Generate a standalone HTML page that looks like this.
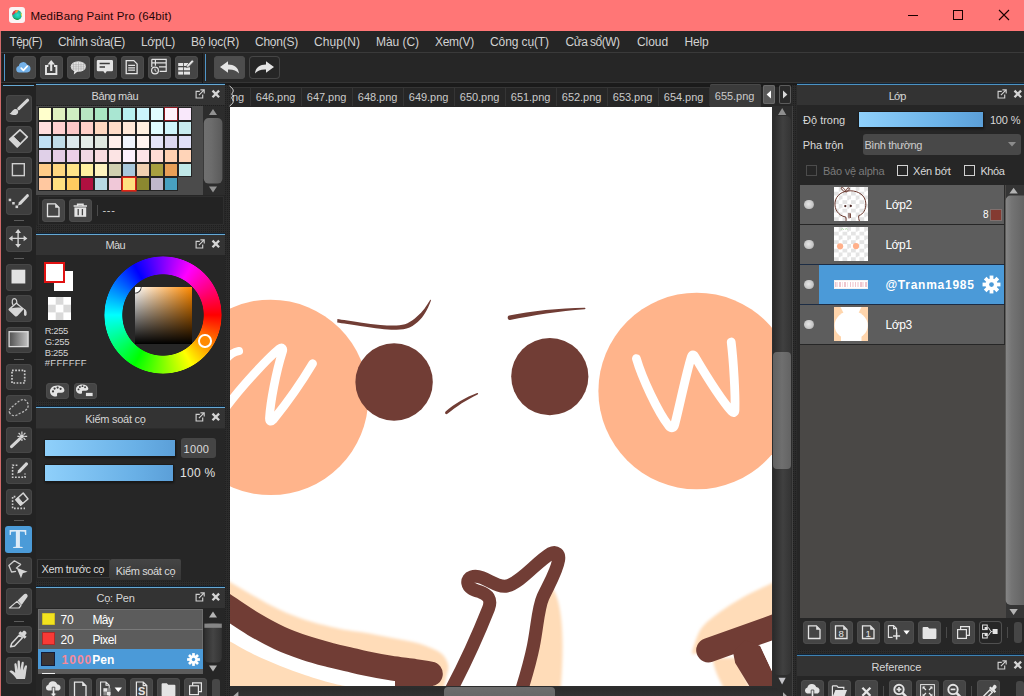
<!DOCTYPE html>
<html lang="vi"><head><meta charset="utf-8"><title>MediBang Paint Pro</title>
<style>

html,body{margin:0;padding:0;background:#262626;}
body{width:1024px;height:696px;overflow:hidden;position:relative;font-family:"Liberation Sans",sans-serif;}
#app{position:absolute;left:0;top:0;width:1024px;height:696px;overflow:hidden;background:#262626;}
#app div,#app span,#app svg{position:absolute;box-sizing:border-box;}
.t{white-space:nowrap;line-height:1;font-family:"Liberation Sans",sans-serif;}
.btn{background:#454545;border-radius:4px;box-shadow:inset 0 0 0 1px #4c4c4c;}
.blue{background:#66a9d4;}
.hdr{background:#333333;}
.dots{background:linear-gradient(90deg,#2b2b2b 1px,transparent 1px) 0 0/2px 2px,linear-gradient(0deg,#2b2b2b 1px,transparent 1px) 0 0/2px 2px,#1f1f1f;}

</style></head>
<body>
<div id="app">
<div style="left:0px;top:0px;width:1024px;height:31px;background:#ff7676;"></div>
<svg style="left:9px;top:7px;" width="16" height="16" viewBox="0 0 16 16"><defs><radialGradient id="ig" cx=".55" cy=".5" r=".6"><stop offset="0" stop-color="#2ee0d0"/><stop offset=".6" stop-color="#1cb89a"/><stop offset="1" stop-color="#18a070"/></radialGradient>
<filter id="ib" x="-20%" y="-20%" width="140%" height="140%"><feGaussianBlur stdDeviation=".45"/></filter><clipPath id="ic"><circle cx="8.1" cy="8" r="5"/></clipPath></defs>
<rect x="0" y="0" width="16" height="16" rx="3" fill="#fbf3f5"/>
<g filter="url(#ib)"><g clip-path="url(#ic)"><circle cx="8.1" cy="8" r="5" fill="url(#ig)"/>
<path d="M2 8 C3 4 5 2.6 7.4 2.6 C7 4.6 6 6.4 4.6 7.6z" fill="#e2304e"/>
<path d="M6.4 3 C7.4 2 9 2 9.6 3 C9 4.4 8 5.6 6.6 6.2 C6.2 5 6.2 4 6.4 3z" fill="#ff9440"/>
<path d="M11.6 5.2 C13 6.4 13.6 8 13 10 C12 9 11.6 7 11.6 5.2z" fill="#e4de5a"/>
<path d="M4.6 11 C6.6 13.6 10 13.6 12 11.4 C10 12 7 12 4.6 11z" fill="#1c9a3c"/></g></g></svg>
<span class="t" id="t0" style="left:30.40px;top:10.77px;font-size:11.5px;color:#1e0505;letter-spacing:0.128px;">MediBang Paint Pro (64bit)</span>
<svg style="left:900px;top:0px;" width="124" height="31" viewBox="0 0 124 31"><g stroke="#1a0000" stroke-width="1" fill="none" shape-rendering="crispEdges">
<path d="M8 15.5 H18"/><rect x="53.5" y="10.5" width="9" height="9"/></g>
<path d="M99 10 L109 20 M109 10 L99 20" stroke="#1a0000" stroke-width="1.1" fill="none"/></svg>
<div style="left:0px;top:31px;width:1024px;height:22px;background:#252525;"></div>
<div style="left:0px;top:52px;width:1024px;height:1px;background:#3a3a3a;"></div>
<span class="t" id="t1" style="left:9.40px;top:35.84px;font-size:12px;color:#d2d2d2;letter-spacing:-0.567px;">Tệp(F)</span>
<span class="t" id="t2" style="left:58.00px;top:35.84px;font-size:12px;color:#d2d2d2;letter-spacing:-0.366px;">Chỉnh sửa(E)</span>
<span class="t" id="t3" style="left:141.00px;top:35.84px;font-size:12px;color:#d2d2d2;letter-spacing:-0.315px;">Lớp(L)</span>
<span class="t" id="t4" style="left:191.00px;top:35.84px;font-size:12px;color:#d2d2d2;letter-spacing:-0.224px;">Bộ lọc(R)</span>
<span class="t" id="t5" style="left:255.00px;top:35.84px;font-size:12px;color:#d2d2d2;letter-spacing:-0.241px;">Chọn(S)</span>
<span class="t" id="t6" style="left:314.00px;top:35.84px;font-size:12px;color:#d2d2d2;letter-spacing:0.092px;">Chụp(N)</span>
<span class="t" id="t7" style="left:376.00px;top:35.84px;font-size:12px;color:#d2d2d2;letter-spacing:-0.049px;">Màu (C)</span>
<span class="t" id="t8" style="left:435.00px;top:35.84px;font-size:12px;color:#d2d2d2;letter-spacing:-0.279px;">Xem(V)</span>
<span class="t" id="t9" style="left:490.00px;top:35.84px;font-size:12px;color:#d2d2d2;letter-spacing:-0.103px;">Công cụ(T)</span>
<span class="t" id="t10" style="left:565.50px;top:35.84px;font-size:12px;color:#d2d2d2;letter-spacing:-0.523px;">Cửa sổ(W)</span>
<span class="t" id="t11" style="left:637.00px;top:35.84px;font-size:12px;color:#d2d2d2;letter-spacing:-0.072px;">Cloud</span>
<span class="t" id="t12" style="left:684.50px;top:35.84px;font-size:12px;color:#d2d2d2;letter-spacing:-0.172px;">Help</span>
<div style="left:0px;top:53px;width:1024px;height:31px;background:#262626;"></div>
<div style="left:2px;top:53px;width:200px;height:30px;background:#1e1e1e;"></div>
<div style="left:0px;top:82px;width:1024px;height:1px;background:#353535;"></div>
<div style="left:0px;top:83px;width:1024px;height:2px;background:#1b1b1b;"></div>
<div style="left:202px;top:53px;width:1px;height:30px;background:#161616;"></div>
<div style="left:4px;top:54px;width:1.4px;height:27px;background:#4f95c8;"></div>
<div style="left:205px;top:54px;width:1.4px;height:27px;background:#4f95c8;"></div>
<div class="btn" style="left:13px;top:56px;width:23px;height:23px;"><svg style="left:0px;top:0px;" width="23" height="23" viewBox="0 0 23 23"><path d="M6.2 16.6 a3.3 3.3 0 0 1 -.4 -6.5 a4.4 4.4 0 0 1 8.4 -1.4 a3.9 3.9 0 0 1 3.3 3.9 a3.7 3.7 0 0 1 -3.3 4z" fill="#74b2ea"/><path d="M8.2 12.2 l2.2 2.1 l3.9 -4.2" stroke="#fff" stroke-width="1.7" fill="none" stroke-linecap="round" stroke-linejoin="round"/></svg></div>
<div class="btn" style="left:40px;top:56px;width:23px;height:23px;"><svg style="left:0px;top:0px;" width="23" height="23" viewBox="0 0 23 23"><path d="M8.4 10 H6 V18 H16.4 V10 H14" stroke="#e4e4e4" stroke-width="1.9" fill="none"/><path d="M11.2 15 V7.4" stroke="#e4e4e4" stroke-width="2.1"/><path d="M7.4 8.6 L11.2 4 L15 8.6z" fill="#e4e4e4"/></svg></div>
<div class="btn" style="left:67px;top:56px;width:23px;height:23px;"><svg style="left:0px;top:0px;" width="23" height="23" viewBox="0 0 23 23"><ellipse cx="11.3" cy="10.5" rx="7.6" ry="5.3" fill="#e4e4e4"/><path d="M7.4 14.2 L6.8 18.4 L11 15.2z" fill="#e4e4e4"/><g stroke="#a6a6a6" stroke-width=".55"><path d="M6.5 7v7M9 6v9M11.5 5.5v10M14 6v9M16.5 7v7M4 8.7h15M3.8 10.8h15M4.2 12.9h14"/></g></svg></div>
<div class="btn" style="left:94px;top:56px;width:23px;height:23px;"><svg style="left:0px;top:0px;" width="23" height="23" viewBox="0 0 23 23"><path d="M4 4 h13.8 a1.2 1.2 0 0 1 1.2 1.2 v8.8 a1.2 1.2 0 0 1 -1.2 1.2 h-5 l-1.7 2.2 l-1.7 -2.2 h-5.4 a1.2 1.2 0 0 1 -1.2 -1.2 v-8.8 a1.2 1.2 0 0 1 1.2 -1.2z" fill="#e4e4e4"/><path d="M5.6 7.6 h10.2 M5.6 10.9 h5.4" stroke="#3c3c3c" stroke-width="1.5"/></svg></div>
<div class="btn" style="left:121px;top:56px;width:23px;height:23px;"><svg style="left:0px;top:0px;" width="23" height="23" viewBox="0 0 23 23"><path d="M5.2 4.6 h7.6 l3.3 3.3 v9.8 h-10.9z" fill="none" stroke="#e4e4e4" stroke-width="1.3"/><path d="M7.2 9.4h6.8M7.2 11.8h6.8M7.2 14.2h6.8" stroke="#e4e4e4" stroke-width="1.2"/></svg></div>
<div class="btn" style="left:148px;top:56px;width:23px;height:23px;"><svg style="left:0px;top:0px;" width="23" height="23" viewBox="0 0 23 23"><path d="M3.8 3.3 h14.4 v12 h-6.6 M3.8 3.3 v7.6 M3.8 6.9 h14.4 M7.4 3.3 v6.4 M11 10.9 h7.2" stroke="#e4e4e4" stroke-width="1.2" fill="none"/><circle cx="7" cy="14.5" r="3.4" fill="#454545" stroke="#e4e4e4" stroke-width="1.2"/><path d="M7 12.6 v2 l1.4 1" stroke="#e4e4e4" stroke-width="1" fill="none"/></svg></div>
<div class="btn" style="left:175px;top:56px;width:23px;height:23px;"><svg style="left:0px;top:0px;" width="23" height="23" viewBox="0 0 23 23"><g fill="#e4e4e4"><rect x="3.2" y="7" width="5" height="3"/><rect x="9" y="7" width="4.4" height="3"/><rect x="3.2" y="11.3" width="5" height="3"/><rect x="9" y="11.3" width="6" height="3"/><rect x="3.2" y="15.6" width="5" height="3"/><rect x="9" y="15.6" width="6" height="3"/></g><path d="M11.2 11.6 l.7 -2.4 l5.2 -5.4 l1.8 1.7 l-5.2 5.4z" fill="#e4e4e4" stroke="#454545" stroke-width=".6"/></svg></div>
<div class="btn" style="left:214px;top:56px;width:31px;height:23px;background:#4d4d4d;"><svg style="left:0px;top:0px;" width="31" height="23" viewBox="0 0 31 23"><path d="M6 11 L14 5.2 V8.6 C20 8.6 24.6 11.6 25 17.6 C22.6 14.4 19 13.4 14 13.6 V16.8z" fill="#e4e4e4"/></svg></div>
<div class="btn" style="left:249px;top:56px;width:31px;height:23px;background:#262626;box-shadow:inset 0 0 0 1px #454545;"><svg style="left:0px;top:0px;" width="31" height="23" viewBox="0 0 31 23"><path d="M25 11 L17 5.2 V8.6 C11 8.6 6.4 11.6 6 17.6 C8.4 14.4 12 13.4 17 13.6 V16.8z" fill="#e4e4e4"/></svg></div>
<div style="left:0px;top:85px;width:36px;height:611px;background:#232323;"></div>
<div class="blue" style="left:3px;top:85px;width:31px;height:1.2px;"></div>
<div style="left:0px;top:31px;width:1px;height:665px;background:#d06a6a;"></div>
<div class="btn" style="left:5.5px;top:95px;width:26.6px;height:26.6px;background:#3d3d3d;box-shadow:inset 0 0 0 1px #474747;"><svg style="left:0px;top:0px;" width="27" height="27" viewBox="0 0 27 27"><path d="M21.6 5.2 L12.8 13.6" stroke="#d6d6d6" stroke-width="3.1" stroke-linecap="round"/><path d="M3.4 18.7 C5.4 18 6 15.6 8 14.5 C10.2 13.4 12.3 14.8 12.2 16.9 C12 20 8.2 21.2 3.4 18.7z" fill="#d6d6d6"/></svg></div>
<div class="btn" style="left:5.5px;top:126px;width:26.6px;height:26.6px;background:#3d3d3d;box-shadow:inset 0 0 0 1px #474747;"><svg style="left:0px;top:0px;" width="27" height="27" viewBox="0 0 27 27"><path d="M14 3.9 L21.3 10.8 L11.2 21 L3.7 13.4z" fill="none" stroke="#d6d6d6" stroke-width="1.7" stroke-linejoin="round"/><path d="M3.7 13.4 L6.9 10.2 L14.5 17.6 L11.2 21z" fill="#d6d6d6" stroke="#d6d6d6" stroke-width="1" stroke-linejoin="round"/></svg></div>
<div class="btn" style="left:5.5px;top:157px;width:26.6px;height:26.6px;background:#3d3d3d;box-shadow:inset 0 0 0 1px #474747;"><svg style="left:0px;top:0px;" width="27" height="27" viewBox="0 0 27 27"><rect x="6.4" y="6.7" width="11.9" height="11.9" fill="none" stroke="#cfcfcf" stroke-width="1.4"/></svg></div>
<div class="btn" style="left:5.5px;top:188px;width:26.6px;height:26.6px;background:#3d3d3d;box-shadow:inset 0 0 0 1px #474747;"><svg style="left:0px;top:0px;" width="27" height="27" viewBox="0 0 27 27"><path d="M13 14.2 L20.6 6.4 C21.6 5.4 23.6 7.2 22.6 8.4 L15.2 16.4 L12 17.4z" fill="#d6d6d6"/><g fill="#d6d6d6"><rect x="2.7" y="10.7" width="2.5" height="2.5"/><rect x="6.2" y="14" width="2.5" height="2.5"/><rect x="9.5" y="17.5" width="2.6" height="2.6"/></g></svg></div>
<div class="btn" style="left:5.5px;top:225.5px;width:26.6px;height:26.6px;background:#3d3d3d;box-shadow:inset 0 0 0 1px #474747;"><svg style="left:0px;top:0px;" width="27" height="27" viewBox="0 0 27 27"><g transform="translate(-1.4,-1.1)"><path d="M13.5 4.2 L16.4 8 H14.2 V12.8 H19 V10.6 L22.8 13.5 L19 16.4 V14.2 H14.2 V19 H16.4 L13.5 22.8 L10.6 19 H12.8 V14.2 H8 V16.4 L4.2 13.5 L8 10.6 V12.8 H12.8 V8 H10.6z" fill="#d6d6d6"/></g></svg></div>
<div class="btn" style="left:5.5px;top:264px;width:26.6px;height:26.6px;background:#3d3d3d;box-shadow:inset 0 0 0 1px #474747;"><svg style="left:0px;top:0px;" width="27" height="27" viewBox="0 0 27 27"><rect x="5.5" y="5.7" width="13.8" height="13.8" fill="#e2e2e2"/></svg></div>
<div class="btn" style="left:5.5px;top:295px;width:26.6px;height:26.6px;background:#3d3d3d;box-shadow:inset 0 0 0 1px #474747;"><svg style="left:0px;top:0px;" width="27" height="27" viewBox="0 0 27 27"><path d="M7 10 C5.4 6.4 6.4 3.6 8.4 3.6 C10.2 3.6 11 6 10.8 8.4" fill="none" stroke="#d6d6d6" stroke-width="1.2"/><path d="M10.3 7.3 L18.1 13.8 L11.6 20.8 C10.8 21.8 9.6 21.8 8.8 21 L3 15.6 C2.3 14.8 2.4 14 3 13.4z" fill="#d6d6d6"/><path d="M5.6 13.2 L10.3 8.9 L15 12.8 C12 12.4 8.6 12.6 5.6 13.2z" fill="#404040"/><path d="M17.6 13.4 C19.8 14 21.2 16 20.6 19.6 C20.4 21.4 18.2 21.6 18 19.6 C17.8 17.6 18.4 15.6 17.6 13.4z" fill="#d6d6d6"/></svg></div>
<div class="btn" style="left:5.5px;top:326.5px;width:26.6px;height:26.6px;background:#3d3d3d;box-shadow:inset 0 0 0 1px #474747;"><svg style="left:0px;top:0px;" width="27" height="27" viewBox="0 0 27 27"><defs><linearGradient id="tg" x1="0" y1="0" x2="1" y2="0"><stop offset="0" stop-color="#505050"/><stop offset="1" stop-color="#c4c4c4"/></linearGradient></defs><rect x="3.1" y="4.7" width="19" height="14.9" fill="url(#tg)" stroke="#dcdcdc" stroke-width="1.3"/></svg></div>
<div class="btn" style="left:5.5px;top:363.5px;width:26.6px;height:26.6px;background:#3d3d3d;box-shadow:inset 0 0 0 1px #474747;"><svg style="left:0px;top:0px;" width="27" height="27" viewBox="0 0 27 27"><rect x="6" y="6.3" width="12.7" height="12.7" fill="none" stroke="#cdcdcd" stroke-width="1.7" stroke-dasharray="1.7 1.48"/></svg></div>
<div class="btn" style="left:5.5px;top:395px;width:26.6px;height:26.6px;background:#3d3d3d;box-shadow:inset 0 0 0 1px #474747;"><svg style="left:0px;top:0px;" width="27" height="27" viewBox="0 0 27 27"><path d="M4 18.4 C1.6 15.4 5 12.6 8.4 10 C11.6 7.4 15.6 3.2 19 5 C22.6 7 23.2 12 20.4 14.6 C17.6 17.2 14 18 11.6 19.6 C8.6 21.6 5.6 20.6 4 18.4z" fill="none" stroke="#b8b8b8" stroke-width="1.3" stroke-dasharray="2.2 1.5"/></svg></div>
<div class="btn" style="left:5.5px;top:426.5px;width:26.6px;height:26.6px;background:#3d3d3d;box-shadow:inset 0 0 0 1px #474747;"><svg style="left:0px;top:0px;" width="27" height="27" viewBox="0 0 27 27"><path d="M5.5 19.6 L14 11.6" stroke="#d6d6d6" stroke-width="3" stroke-linecap="round"/><path d="M15.9 4.4 v2.6 M15.9 11.6 v2.4 M11.4 9.3 h2.4 M18.2 9.3 h3 M12.6 6 l1.7 1.7 M19.4 5.8 l-1.8 1.8 M19.4 12.8 l-1.8 -1.8" stroke="#d6d6d6" stroke-width="1.2"/><circle cx="15.9" cy="9.3" r="2" fill="#d6d6d6"/></svg></div>
<div class="btn" style="left:5.5px;top:457.5px;width:26.6px;height:26.6px;background:#3d3d3d;box-shadow:inset 0 0 0 1px #474747;"><svg style="left:0px;top:0px;" width="27" height="27" viewBox="0 0 27 27"><path d="M11.4 7.2 H6.6 V19.2 H19 V15.4" fill="none" stroke="#cdcdcd" stroke-width="1.6" stroke-dasharray="1.7 1.5"/><path d="M12.2 12.2 L19.6 4.6 C20.6 3.6 22.8 5.6 21.8 6.8 L14.4 14.4 L11.2 15.4z" fill="#d6d6d6"/></svg></div>
<div class="btn" style="left:5.5px;top:488.5px;width:26.6px;height:26.6px;background:#3d3d3d;box-shadow:inset 0 0 0 1px #474747;"><svg style="left:0px;top:0px;" width="27" height="27" viewBox="0 0 27 27"><path d="M9.4 7.6 H6.6 V19.4 H19" fill="none" stroke="#cdcdcd" stroke-width="1.6" stroke-dasharray="1.7 1.5"/><path d="M17.2 4 L22 10 L14.6 16.2 L9.8 10.7z" fill="none" stroke="#d6d6d6" stroke-width="1.5" stroke-linejoin="round"/><path d="M9.8 10.7 L12.2 8.6 L17 14.2 L14.6 16.2z" fill="#d6d6d6" stroke="#d6d6d6" stroke-width="1" stroke-linejoin="round"/></svg></div>
<div style="left:5.2px;top:525.7px;width:27px;height:27.5px;background:#4b9bd8;border-radius:3px;"><span style="left:1.7px;top:-1.1px;width:22px;height:27px;line-height:27px;text-align:center;font-family:'Liberation Serif',serif;font-size:28px;font-weight:bold;color:#deebf7;transform:scaleX(.93);">T</span></div>
<div class="btn" style="left:5.5px;top:557px;width:26.6px;height:26.6px;background:#3d3d3d;box-shadow:inset 0 0 0 1px #474747;"><svg style="left:0px;top:0px;" width="27" height="27" viewBox="0 0 27 27"><path d="M10 11.6 L14.6 7.4 L8.4 3.8 L2.9 8.6 L5.6 15 L10 14.4" fill="none" stroke="#d0d0d0" stroke-width="1.3" stroke-linejoin="round"/><path d="M10.6 10.8 L21.6 14.8 L16.8 16.2 L15 21.2z" fill="#d6d6d6"/></svg></div>
<div class="btn" style="left:5.5px;top:588px;width:26.6px;height:26.6px;background:#3d3d3d;box-shadow:inset 0 0 0 1px #474747;"><svg style="left:0px;top:0px;" width="27" height="27" viewBox="0 0 27 27"><path d="M3.4 20 L11 13.4 L15 17.6 L13 20z" fill="none" stroke="#d6d6d6" stroke-width="1.2" stroke-linejoin="round"/><path d="M11.6 12.6 L17.8 6.4 C20 4.4 23 7.2 21 9.6 L15.6 17z" fill="#d6d6d6"/></svg></div>
<div class="btn" style="left:5.5px;top:626px;width:26.6px;height:26.6px;background:#3d3d3d;box-shadow:inset 0 0 0 1px #474747;"><svg style="left:0px;top:0px;" width="27" height="27" viewBox="0 0 27 27"><path d="M5.6 17.6 L13.4 9 L16.4 11.8 L8.6 20 L4.6 20.8z" fill="none" stroke="#d6d6d6" stroke-width="1.5" stroke-linejoin="round"/><path d="M12.4 7.2 L14.4 5.2 L16 6.6 L17 5.2 C18.4 3.6 21.6 6.4 20.2 8 L19 9.2 L20.6 10.8 L18.6 12.8z" fill="#d6d6d6"/></svg></div>
<div class="btn" style="left:5.5px;top:657px;width:26.6px;height:26.6px;background:#3d3d3d;box-shadow:inset 0 0 0 1px #474747;"><svg style="left:0px;top:0px;" width="27" height="27" viewBox="0 0 27 27"><path d="M10.6 22 C8.8 19.6 6.2 16.6 3.4 14.6 C4.2 13 6.4 13.4 8.6 15.4 L9.2 15.8 L8.4 7.6 C8.3 6 10.4 5.9 10.6 7.4 L11.6 13 L11.6 4.8 C11.6 3.2 13.8 3.2 13.9 4.8 L14.3 13 L15.6 5.8 C15.9 4.3 18 4.6 17.8 6.2 L17 13.6 L18.9 9 C19.5 7.6 21.4 8.3 21 9.8 C20.2 13 20 17.6 19 22z" fill="#d6d6d6"/></svg></div>
<div style="left:14px;top:219.5px;width:9.8px;height:1.2px;background:#5c5c5c;"></div>
<div style="left:14px;top:257.5px;width:9.8px;height:1.2px;background:#5c5c5c;"></div>
<div style="left:14px;top:358.5px;width:9.8px;height:1.2px;background:#5c5c5c;"></div>
<div style="left:14px;top:519.5px;width:9.8px;height:1.2px;background:#5c5c5c;"></div>
<div style="left:14px;top:620.5px;width:9.8px;height:1.2px;background:#5c5c5c;"></div>
<div class="dots" style="left:36px;top:85px;width:194px;height:611px;"></div>
<div style="left:36px;top:83px;width:189px;height:1px;background:#0f2438;"></div><div class="blue" style="left:36px;top:84px;width:189px;height:1.2px;"></div><div class="hdr" style="left:36px;top:85.2px;width:189px;height:20.2px;"></div><svg style="left:194.9px;top:89px;" width="27" height="10" viewBox="0 0 27 10"><path d="M4.8 2.4 H1.1 V9 H7.7 V5.4" fill="none" stroke="#d0d0d0" stroke-width="1.15"/><path d="M3.9 6.1 L8.9 1.1 M5.4 .8 H9.2 V4.6" fill="none" stroke="#d0d0d0" stroke-width="1.15"/>
<path d="M17.5 1.6 L24.1 8.2 M24.1 1.6 L17.5 8.2" stroke="#d4d4d4" stroke-width="2.3" fill="none"/></svg><span class="t" id="t13" style="left:91.60px;top:90.69px;font-size:11px;color:#d6d6d6;letter-spacing:-0.457px;">Bảng màu</span>
<div style="left:36px;top:106px;width:189px;height:119.4px;background:#262626;"></div>
<div style="left:36px;top:106px;width:167px;height:89px;background:#4b4b4b;"></div>
<div style="left:203px;top:106px;width:22px;height:89px;background:#2c2c2c;"></div>
<div style="left:38px;top:107px;width:154px;height:70px;background:#242424;"></div>
<div style="left:38px;top:177px;width:140px;height:14px;background:#242424;"></div>
<div style="left:39px;top:108px;width:12px;height:12px;background:#ffffcc;"></div><div style="left:53px;top:108px;width:12px;height:12px;background:#dff0c0;"></div><div style="left:67px;top:108px;width:12px;height:12px;background:#d0eec2;"></div><div style="left:81px;top:108px;width:12px;height:12px;background:#b8e6c2;"></div><div style="left:95px;top:108px;width:12px;height:12px;background:#a9e6c2;"></div><div style="left:109px;top:108px;width:12px;height:12px;background:#a9e6d2;"></div><div style="left:123px;top:108px;width:12px;height:12px;background:#b8f0f0;"></div><div style="left:137px;top:108px;width:12px;height:12px;background:#ccf4fc;"></div><div style="left:151px;top:108px;width:12px;height:12px;background:#e0fcff;"></div><div style="left:165px;top:108px;width:12px;height:12px;background:#fff2fb;box-shadow:0 0 0 1px #8a1820;"></div><div style="left:179px;top:108px;width:12px;height:12px;background:#f9e8fb;"></div><div style="left:39px;top:122px;width:12px;height:12px;background:#ffdede;"></div><div style="left:53px;top:122px;width:12px;height:12px;background:#ffd0d0;"></div><div style="left:67px;top:122px;width:12px;height:12px;background:#fcc8c8;"></div><div style="left:81px;top:122px;width:12px;height:12px;background:#ffd0c8;"></div><div style="left:95px;top:122px;width:12px;height:12px;background:#ffd8c0;"></div><div style="left:109px;top:122px;width:12px;height:12px;background:#ffdcc8;"></div><div style="left:123px;top:122px;width:12px;height:12px;background:#ffe8d8;"></div><div style="left:137px;top:122px;width:12px;height:12px;background:#fff0e0;"></div><div style="left:151px;top:122px;width:12px;height:12px;background:#e0fcff;"></div><div style="left:165px;top:122px;width:12px;height:12px;background:#d0f6fc;"></div><div style="left:179px;top:122px;width:12px;height:12px;background:#c8ecf0;"></div><div style="left:39px;top:136px;width:12px;height:12px;background:#c0e0f4;"></div><div style="left:53px;top:136px;width:12px;height:12px;background:#c0dce8;"></div><div style="left:67px;top:136px;width:12px;height:12px;background:#dce8ec;"></div><div style="left:81px;top:136px;width:12px;height:12px;background:#e4ece8;"></div><div style="left:95px;top:136px;width:12px;height:12px;background:#e0e8e0;"></div><div style="left:109px;top:136px;width:12px;height:12px;background:#fff0ec;"></div><div style="left:123px;top:136px;width:12px;height:12px;background:#f0f4fc;"></div><div style="left:137px;top:136px;width:12px;height:12px;background:#fff4f0;"></div><div style="left:151px;top:136px;width:12px;height:12px;background:#e4e4f8;"></div><div style="left:165px;top:136px;width:12px;height:12px;background:#dcd8f0;"></div><div style="left:179px;top:136px;width:12px;height:12px;background:#e0e0f8;"></div><div style="left:39px;top:150px;width:12px;height:12px;background:#e0d0e8;"></div><div style="left:53px;top:150px;width:12px;height:12px;background:#e4cce4;"></div><div style="left:67px;top:150px;width:12px;height:12px;background:#ecd0e8;"></div><div style="left:81px;top:150px;width:12px;height:12px;background:#f0d8e4;"></div><div style="left:95px;top:150px;width:12px;height:12px;background:#f8dce0;"></div><div style="left:109px;top:150px;width:12px;height:12px;background:#fce4e4;"></div><div style="left:123px;top:150px;width:12px;height:12px;background:#fcf0fc;"></div><div style="left:137px;top:150px;width:12px;height:12px;background:#fce4e8;"></div><div style="left:151px;top:150px;width:12px;height:12px;background:#ffdcd4;"></div><div style="left:165px;top:150px;width:12px;height:12px;background:#ffd0b0;"></div><div style="left:179px;top:150px;width:12px;height:12px;background:#ffd4b8;"></div><div style="left:39px;top:164px;width:12px;height:12px;background:#ffcc88;"></div><div style="left:53px;top:164px;width:12px;height:12px;background:#ffd880;"></div><div style="left:67px;top:164px;width:12px;height:12px;background:#ffe488;"></div><div style="left:81px;top:164px;width:12px;height:12px;background:#fff0a0;"></div><div style="left:95px;top:164px;width:12px;height:12px;background:#fff4c0;"></div><div style="left:109px;top:164px;width:12px;height:12px;background:#d0d0b0;"></div><div style="left:123px;top:164px;width:12px;height:12px;background:#a8c8dc;"></div><div style="left:137px;top:164px;width:12px;height:12px;background:#f0d0b0;"></div><div style="left:151px;top:164px;width:12px;height:12px;background:#a8a040;"></div><div style="left:165px;top:164px;width:12px;height:12px;background:#e8a058;"></div><div style="left:179px;top:164px;width:12px;height:12px;background:#c0e8e8;"></div><div style="left:39px;top:178px;width:12px;height:12px;background:#ffc8a0;"></div><div style="left:53px;top:178px;width:12px;height:12px;background:#ffe080;"></div><div style="left:67px;top:178px;width:12px;height:12px;background:#ffcc60;"></div><div style="left:81px;top:178px;width:12px;height:12px;background:#b01040;"></div><div style="left:95px;top:178px;width:12px;height:12px;background:#b8d8e4;"></div><div style="left:109px;top:178px;width:12px;height:12px;background:#f0c8d8;"></div><div style="left:123px;top:178px;width:12px;height:12px;background:#ffe080;box-shadow:0 0 0 1.6px #e02414;"></div><div style="left:137px;top:178px;width:12px;height:12px;background:#8c8830;"></div><div style="left:151px;top:178px;width:12px;height:12px;background:#c0b8cc;"></div><div style="left:165px;top:178px;width:12px;height:12px;background:#48a0c0;"></div>
<svg style="left:203px;top:106px;" width="22" height="89" viewBox="0 0 22 89"><defs><linearGradient id="sbg" x1="0" y1="0" x2="1" y2="0"><stop offset="0" stop-color="#707070"/><stop offset=".4" stop-color="#6c6c6c"/><stop offset="1" stop-color="#5a5a5a"/></linearGradient></defs>
<path d="M6 9 L10 3 L14 9z" fill="#929292"/><rect x=".8" y="12" width="18.6" height="65.6" rx="5" fill="url(#sbg)"/><path d="M6 80.6 L14 80.6 L10 86.6z" fill="#929292"/></svg>
<div style="left:38px;top:195.5px;width:185.5px;height:29.5px;background:#232323;border:1px solid #2e2e2e;"></div>
<div class="btn" style="left:42px;top:199px;width:23px;height:23px;"><svg style="left:0px;top:0px;" width="23" height="23" viewBox="0 0 23 23"><path d="M5.5 4.9 h7.9 l3.6 3.6 v9 h-11.5z" fill="none" stroke="#e4e4e4" stroke-width="1.3"/><path d="M13.2 4.9 v3.8 h3.8z" fill="#e4e4e4"/></svg></div>
<div class="btn" style="left:69px;top:199px;width:23px;height:23px;"><svg style="left:0px;top:0px;" width="23" height="23" viewBox="0 0 23 23"><path d="M4.6 7 h13.4 M8.6 6.6 v-1.4 h5.4 v1.4" stroke="#e4e4e4" stroke-width="1.5" fill="none"/><path d="M5.4 8.4 h11.8 v9.4 h-11.8z" fill="#e4e4e4"/><path d="M9.2 10 v6.2 M13.4 10 v6.2" stroke="#464646" stroke-width="1.3"/></svg></div>
<div style="left:97px;top:205px;width:1px;height:11px;background:#4a4a4a;"></div>
<span class="t" id="t14" style="left:102.40px;top:204.69px;font-size:11px;color:#d0d0d0;letter-spacing:0.800px;">---</span>
<div style="left:36px;top:232.5px;width:189px;height:1px;background:#0f2438;"></div><div class="blue" style="left:36px;top:233.5px;width:189px;height:1.2px;"></div><div class="hdr" style="left:36px;top:234.7px;width:189px;height:20.2px;"></div><svg style="left:194.9px;top:238.5px;" width="27" height="10" viewBox="0 0 27 10"><path d="M4.8 2.4 H1.1 V9 H7.7 V5.4" fill="none" stroke="#d0d0d0" stroke-width="1.15"/><path d="M3.9 6.1 L8.9 1.1 M5.4 .8 H9.2 V4.6" fill="none" stroke="#d0d0d0" stroke-width="1.15"/>
<path d="M17.5 1.6 L24.1 8.2 M24.1 1.6 L17.5 8.2" stroke="#d4d4d4" stroke-width="2.3" fill="none"/></svg><span class="t" id="t15" style="left:105.60px;top:239.69px;font-size:11px;color:#d6d6d6;letter-spacing:-0.635px;">Màu</span>
<div style="left:36px;top:255px;width:189px;height:146px;background:#262626;"></div>
<div style="left:53.6px;top:271px;width:19.8px;height:20.2px;background:#ffffff;"></div>
<div style="left:44px;top:262px;width:21px;height:21px;background:#ffffff;border:2px solid #e01212;"></div>
<div style="left:47.5px;top:297.2px;width:23.2px;height:23.1px;background:#ffffff;background-image:conic-gradient(#d9d9d9 25%,#fff 0 50%,#d9d9d9 0 75%,#fff 0);background-size:15.4px 15.4px;background-position:0 0;"></div>
<span class="t" id="t16" style="left:44.70px;top:325.96px;font-size:9.5px;color:#d2d2d2;letter-spacing:-0.432px;">R:255</span>
<span class="t" id="t17" style="left:44.70px;top:336.96px;font-size:9.5px;color:#d2d2d2;letter-spacing:-0.278px;">G:255</span>
<span class="t" id="t18" style="left:44.70px;top:347.56px;font-size:9.5px;color:#d2d2d2;letter-spacing:-0.326px;">B:255</span>
<span class="t" id="t19" style="left:44.70px;top:357.96px;font-size:9.5px;color:#d2d2d2;letter-spacing:0.313px;">#FFFFFF</span>
<div style="left:103.8px;top:255.8px;width:118.6px;height:118.6px;border-radius:50%;background:conic-gradient(from 90deg,#ff0000,#ffff00,#00ff00,#00ffff,#0000ff,#ff00ff,#ff0000);-webkit-mask:radial-gradient(circle closest-side,transparent 68.4%,#000 69.6%,#000 98.6%,transparent 100%);mask:radial-gradient(circle closest-side,transparent 68.4%,#000 69.6%,#000 98.6%,transparent 100%);"></div>
<div style="left:135px;top:287px;width:57px;height:57px;background:linear-gradient(to bottom,rgba(0,0,0,0),#000),linear-gradient(to right,#ffffff,#ff8a00);"></div>
<svg style="left:130px;top:282px;" width="14" height="14" viewBox="0 0 14 14"><path d="M5 5 H11.6 A6.6 6.6 0 0 1 5 11.6z" fill="#333"/><path d="M5 5 H10.8 A5.8 5.8 0 0 1 5 10.8z" fill="#fff"/></svg>
<div style="left:198.4px;top:334.4px;width:13.6px;height:13.6px;border-radius:50%;border:2.2px solid #fff;background:#ff8a00;"></div>
<div class="btn" style="left:46px;top:383px;width:23px;height:16px;"><svg style="left:0px;top:0px;" width="23" height="16" viewBox="0 0 23 16"><path d="M11.4 2.6 C6.6 2.6 4 5.4 4 8.4 C4 11.6 7 13.6 10 13.4 C11.4 13.4 11.2 12 11 11.4 C10.8 10.4 11.6 9.8 12.6 9.8 L15.4 9.8 C17.4 9.8 18.6 8.6 18.4 7 C18 4.4 15 2.6 11.4 2.6z" fill="#e4e4e4"/><g fill="#3e3e3e"><circle cx="7" cy="8.4" r="1.1"/><circle cx="8.6" cy="5.6" r="1.1"/><circle cx="11.6" cy="4.6" r="1.1"/><circle cx="14.6" cy="5.8" r="1.1"/></g></svg></div>
<div class="btn" style="left:73.5px;top:383px;width:23px;height:16px;"><svg style="left:0px;top:0px;" width="23" height="16" viewBox="0 0 23 16"><g transform="translate(-1.5,-.8) scale(.86)"><path d="M11.4 2.6 C6.6 2.6 4 5.4 4 8.4 C4 11.6 7 13.6 10 13.4 C11.4 13.4 11.2 12 11 11.4 C10.8 10.4 11.6 9.8 12.6 9.8 L15.4 9.8 C17.4 9.8 18.6 8.6 18.4 7 C18 4.4 15 2.6 11.4 2.6z" fill="#e4e4e4"/><g fill="#3e3e3e"><circle cx="7" cy="8.4" r="1.1"/><circle cx="8.6" cy="5.6" r="1.1"/><circle cx="11.6" cy="4.6" r="1.1"/><circle cx="14.6" cy="5.8" r="1.1"/></g></g><rect x="11.6" y="9.4" width="7.4" height="4" fill="#e4e4e4" stroke="#3e3e3e" stroke-width=".7"/></svg></div>
<div style="left:36px;top:406px;width:189px;height:1px;background:#0f2438;"></div><div class="blue" style="left:36px;top:407px;width:189px;height:1.2px;"></div><div class="hdr" style="left:36px;top:408.2px;width:189px;height:20.2px;"></div><svg style="left:194.9px;top:412px;" width="27" height="10" viewBox="0 0 27 10"><path d="M4.8 2.4 H1.1 V9 H7.7 V5.4" fill="none" stroke="#d0d0d0" stroke-width="1.15"/><path d="M3.9 6.1 L8.9 1.1 M5.4 .8 H9.2 V4.6" fill="none" stroke="#d0d0d0" stroke-width="1.15"/>
<path d="M17.5 1.6 L24.1 8.2 M24.1 1.6 L17.5 8.2" stroke="#d4d4d4" stroke-width="2.3" fill="none"/></svg><span class="t" id="t20" style="left:85.30px;top:413.69px;font-size:11px;color:#d6d6d6;letter-spacing:-0.274px;">Kiểm soát cọ</span>
<div style="left:36px;top:428.5px;width:189px;height:152.2px;background:#262626;"></div>
<div style="left:45.2px;top:440.3px;width:129.8px;height:15.5px;background:linear-gradient(to right,#8fd0fb,#69b0e6 70%,#5b9fd8);box-shadow:0 0 0 .7px #1a1a1a, 0 1px 2px .5px rgba(0,0,0,.45);"></div>
<div style="left:181.4px;top:437.7px;width:34.2px;height:20.5px;background:#454545;border-radius:3px;"></div>
<span class="t" id="t21" style="left:183.60px;top:443.69px;font-size:11px;color:#dcdcdc;letter-spacing:0.304px;">1000</span>
<div style="left:45.2px;top:465.4px;width:127.8px;height:15.2px;background:linear-gradient(to right,#8fd0fb,#69b0e6 70%,#5b9fd8);box-shadow:0 0 0 .7px #1a1a1a, 0 1px 2px .5px rgba(0,0,0,.45);"></div>
<span class="t" id="t22" style="left:180.00px;top:466.84px;font-size:12px;color:#e2e2e2;letter-spacing:0.294px;">100 %</span>
<div style="left:36.8px;top:558.8px;width:73.4px;height:19px;background:#222222;border:1px solid #383838;"></div>
<div style="left:110.4px;top:558.6px;width:71px;height:21.6px;border-radius:2px 2px 0 0;background:linear-gradient(to bottom,#454545,#363636);"></div>
<span class="t" id="t23" style="left:41.60px;top:563.69px;font-size:11px;color:#dadada;letter-spacing:-0.388px;">Xem trước cọ</span>
<span class="t" id="t24" style="left:115.80px;top:565.69px;font-size:11px;color:#dadada;letter-spacing:-0.349px;">Kiểm soát cọ</span>
<div style="left:36px;top:585.5px;width:189px;height:1px;background:#0f2438;"></div><div class="blue" style="left:36px;top:586.5px;width:189px;height:1.2px;"></div><div class="hdr" style="left:36px;top:587.7px;width:189px;height:20.2px;"></div><svg style="left:194.9px;top:591.5px;" width="27" height="10" viewBox="0 0 27 10"><path d="M4.8 2.4 H1.1 V9 H7.7 V5.4" fill="none" stroke="#d0d0d0" stroke-width="1.15"/><path d="M3.9 6.1 L8.9 1.1 M5.4 .8 H9.2 V4.6" fill="none" stroke="#d0d0d0" stroke-width="1.15"/>
<path d="M17.5 1.6 L24.1 8.2 M24.1 1.6 L17.5 8.2" stroke="#d4d4d4" stroke-width="2.3" fill="none"/></svg><span class="t" id="t25" style="left:96.50px;top:592.69px;font-size:11px;color:#d6d6d6;letter-spacing:-0.250px;">Cọ: Pen</span>
<div style="left:36px;top:608px;width:189px;height:88px;background:#262626;"></div>
<div style="left:38px;top:609px;width:165px;height:65px;background:#5c5c5c;border:1px solid #6e6e6e;"></div>
<div style="left:38px;top:629px;width:165px;height:1px;background:#7a7a7a;"></div>
<div style="left:38px;top:649px;width:165px;height:20.3px;background:#4b9ad8;"></div>
<div style="left:38px;top:669.3px;width:165px;height:4.7px;background:#5c5c5c;"></div>
<div style="left:41.9px;top:672.7px;width:12.8px;height:1.1px;background:#f0f0f0;"></div>
<div style="left:41.5px;top:612.6px;width:13px;height:12.6px;background:#f2e21e;box-shadow:inset 0 0 0 .6px #b8a820;"></div>
<div style="left:41.5px;top:632.4px;width:13px;height:13px;background:#f83a36;box-shadow:inset 0 0 0 1px #b02a28;"></div>
<div style="left:41.2px;top:652.2px;width:13.4px;height:13.6px;background:#3b3432;box-shadow:inset 0 0 0 1px #131d3a;"></div>
<span class="t" id="t26" style="left:60.40px;top:613.84px;font-size:12px;color:#ffffff;letter-spacing:-0.180px;">70</span>
<span class="t" id="t27" style="left:92.40px;top:613.84px;font-size:12px;color:#ffffff;letter-spacing:-0.657px;">Mây</span>
<span class="t" id="t28" style="left:60.40px;top:633.84px;font-size:12px;color:#ffffff;letter-spacing:-0.180px;">20</span>
<span class="t" id="t29" style="left:92.40px;top:633.84px;font-size:12px;color:#ffffff;letter-spacing:-0.423px;">Pixel</span>
<span class="t" id="t30" style="left:61.60px;top:653.84px;font-size:12px;color:#f48a9a;font-weight:bold;letter-spacing:0.974px;">1000</span>
<span class="t" id="t31" style="left:92.20px;top:653.84px;font-size:12px;color:#ffffff;font-weight:bold;letter-spacing:0.128px;">Pen</span>
<svg style="left:186.6px;top:653.4px;" width="13" height="13" viewBox="-6.5 -6.5 13 13"><g fill="#fff"><circle cx="0" cy="0" r="4.3"/><rect x="-1.35" y="-6.4" width="2.7" height="3.4" transform="rotate(0)"/><rect x="-1.35" y="-6.4" width="2.7" height="3.4" transform="rotate(45)"/><rect x="-1.35" y="-6.4" width="2.7" height="3.4" transform="rotate(90)"/><rect x="-1.35" y="-6.4" width="2.7" height="3.4" transform="rotate(135)"/><rect x="-1.35" y="-6.4" width="2.7" height="3.4" transform="rotate(180)"/><rect x="-1.35" y="-6.4" width="2.7" height="3.4" transform="rotate(225)"/><rect x="-1.35" y="-6.4" width="2.7" height="3.4" transform="rotate(270)"/><rect x="-1.35" y="-6.4" width="2.7" height="3.4" transform="rotate(315)"/></g><circle cx="0" cy="0" r="1.7" fill="#4b9ad8"/></svg>
<svg style="left:203px;top:608px;" width="22" height="68" viewBox="0 0 22 68"><defs><linearGradient id="sbd" x1="0" y1="0" x2="1" y2="0"><stop offset="0" stop-color="#2e2e2e"/><stop offset=".5" stop-color="#444"/><stop offset="1" stop-color="#333"/></linearGradient></defs>
<path d="M6 9.4 L10 3.4 L14 9.4z" fill="#b4b4b4"/><rect x="1.4" y="15" width="17.4" height="39.6" rx="5" fill="url(#sbd)"/><rect x="1.4" y="15.6" width="17.4" height="4.2" fill="#858585"/><path d="M6 57.6 L14 57.6 L10 63.6z" fill="#b4b4b4"/></svg>
<div class="btn" style="left:42px;top:678px;width:23px;height:23px;"><svg style="left:0px;top:0px;" width="23" height="23" viewBox="0 0 23 23"><g transform="translate(0,-.8)"><path d="M6 13.4 a3 3 0 0 1 .4 -5.8 a4.6 4.6 0 0 1 8.8 -.6 a3.4 3.4 0 0 1 1.6 6.4z" fill="#e4e4e4"/><path d="M10.2 10 h2.6 v6 h2.2 l-3.5 4 l-3.5 -4 h2.2z" fill="#e4e4e4" stroke="#3e3e3e" stroke-width=".8"/></g></svg></div>
<div class="btn" style="left:69px;top:678px;width:23px;height:23px;"><svg style="left:0px;top:0px;" width="23" height="23" viewBox="0 0 23 23"><g transform="translate(0,-.8)"><path d="M5.5 4.9 h7.9 l3.6 3.6 v12 h-11.5z" fill="none" stroke="#e4e4e4" stroke-width="1.3"/><path d="M13.2 4.9 v3.8 h3.8z" fill="#e4e4e4"/></g></svg></div>
<div class="btn" style="left:96.4px;top:678px;width:29.4px;height:23px;"><svg style="left:0px;top:0px;" width="29.4" height="23" viewBox="0 0 29.4 23"><g transform="translate(0,-.8)"><path d="M4.6 4.8 h5.4 l3.2 3.2 v12 h-8.6z M10 4.8 v3.2 h3.2" fill="none" stroke="#e4e4e4" stroke-width="1.1"/><rect x="7.4" y="11" width="3.6" height="3.6" fill="#e4e4e4"/><rect x="11" y="14.6" width="3.6" height="3.6" fill="#e4e4e4"/><rect x="7.4" y="14.6" width="3.6" height="3.6" fill="#8a8a8a"/><rect x="11" y="11" width="3.6" height="3.6" fill="#8a8a8a"/><path d="M18.6 10.4 h7.4 l-3.7 4.4z" fill="#fff"/></g></svg></div>
<div class="btn" style="left:130px;top:678px;width:23px;height:23px;"><svg style="left:0px;top:0px;" width="23" height="23" viewBox="0 0 23 23"><g transform="translate(0,-.8)"><path d="M6.4 4.8 h6.8 l3.6 3.6 v12 h-10.4z M13.2 4.8 v3.6 h3.6" fill="none" stroke="#e4e4e4" stroke-width="1.2"/><text x="11.6" y="17.4" text-anchor="middle" font-family="Liberation Sans,sans-serif" font-size="11" font-weight="bold" fill="#e4e4e4">S</text></g></svg></div>
<div class="btn" style="left:157.3px;top:678px;width:23px;height:23px;"><svg style="left:0px;top:0px;" width="23" height="23" viewBox="0 0 23 23"><g transform="translate(0,-.8)"><path d="M4.6 8.6 V7 a1 1 0 0 1 1 -1 h4.2 l1.4 1.6 h6.2 a1 1 0 0 1 1 1 v9.4 a1 1 0 0 1 -1 1 h-11.800000000000001 a1 1 0 0 1 -1 -1z" fill="#e4e4e4"/></g></svg></div>
<div class="btn" style="left:184.3px;top:678px;width:23px;height:23px;"><svg style="left:0px;top:0px;" width="23" height="23" viewBox="0 0 23 23"><g transform="translate(0,-.8)"><rect x="5.6" y="8.6" width="8.8" height="8.8" fill="#414141" stroke="#e4e4e4" stroke-width="1.2"/><path d="M8.6 8.6 V5.6 H17.4 V14.4 H14.4" fill="none" stroke="#e4e4e4" stroke-width="1.2"/></g></svg></div>
<div style="left:212.4px;top:679px;width:8px;height:20px;background:#474747;border-radius:3px;"></div>
<div style="left:230px;top:85px;width:567px;height:21.5px;background:#262626;"></div>
<div style="left:230px;top:85px;width:567px;height:1.5px;background:#1a1a1a;"></div>
<div style="left:229.5px;top:86.5px;width:51.5px;height:19.5px;background:#262626;border:1px solid #353535;border-bottom:none;"></div>
<div style="left:250.3px;top:86.5px;width:51.5px;height:19.5px;background:#262626;border:1px solid #353535;border-bottom:none;"></div>
<div style="left:301.3px;top:86.5px;width:51.5px;height:19.5px;background:#262626;border:1px solid #353535;border-bottom:none;"></div>
<div style="left:352.3px;top:86.5px;width:51.5px;height:19.5px;background:#262626;border:1px solid #353535;border-bottom:none;"></div>
<div style="left:403.3px;top:86.5px;width:51.5px;height:19.5px;background:#262626;border:1px solid #353535;border-bottom:none;"></div>
<div style="left:454.3px;top:86.5px;width:51.5px;height:19.5px;background:#262626;border:1px solid #353535;border-bottom:none;"></div>
<div style="left:505.3px;top:86.5px;width:51.5px;height:19.5px;background:#262626;border:1px solid #353535;border-bottom:none;"></div>
<div style="left:556.3px;top:86.5px;width:51.5px;height:19.5px;background:#262626;border:1px solid #353535;border-bottom:none;"></div>
<div style="left:607.3px;top:86.5px;width:51.5px;height:19.5px;background:#262626;border:1px solid #353535;border-bottom:none;"></div>
<div style="left:658.3px;top:86.5px;width:51.5px;height:19.5px;background:#262626;border:1px solid #353535;border-bottom:none;"></div>
<div style="left:709.5px;top:84px;width:51px;height:22.5px;background:#3a3a3a;border-radius:2px 2px 0 0;box-shadow:inset 0 1px 0 #484848;"></div>
<span class="t" id="t32" style="left:232.10px;top:91.69px;font-size:11px;color:#cacaca;letter-spacing:-0.175px;">ng</span>
<svg style="left:226px;top:85px;" width="10" height="22" viewBox="0 0 10 22"><path d="M3.6 1 C7 3.5 8 5.4 6.6 7.6 C5.6 9.4 5.4 9.8 7.6 10.8 C5.2 11.8 5.4 12.6 6.6 14.4 C8 16.6 7 18.6 3.6 21" fill="none" stroke="#e8e8e8" stroke-width="1"/></svg>
<span class="t" id="t33" style="left:255.80px;top:91.69px;font-size:11px;color:#cacaca;letter-spacing:-0.024px;">646.png</span>
<span class="t" id="t34" style="left:306.80px;top:91.69px;font-size:11px;color:#cacaca;letter-spacing:-0.024px;">647.png</span>
<span class="t" id="t35" style="left:357.80px;top:91.69px;font-size:11px;color:#cacaca;letter-spacing:-0.024px;">648.png</span>
<span class="t" id="t36" style="left:408.80px;top:91.69px;font-size:11px;color:#cacaca;letter-spacing:-0.024px;">649.png</span>
<span class="t" id="t37" style="left:459.80px;top:91.69px;font-size:11px;color:#cacaca;letter-spacing:-0.024px;">650.png</span>
<span class="t" id="t38" style="left:510.80px;top:91.69px;font-size:11px;color:#cacaca;letter-spacing:-0.024px;">651.png</span>
<span class="t" id="t39" style="left:561.80px;top:91.69px;font-size:11px;color:#cacaca;letter-spacing:-0.024px;">652.png</span>
<span class="t" id="t40" style="left:612.80px;top:91.69px;font-size:11px;color:#cacaca;letter-spacing:-0.024px;">653.png</span>
<span class="t" id="t41" style="left:663.80px;top:91.69px;font-size:11px;color:#cacaca;letter-spacing:-0.024px;">654.png</span>
<span class="t" id="t42" style="left:714.80px;top:91.09px;font-size:11px;color:#cacaca;letter-spacing:-0.024px;">655.png</span>
<div style="left:763.2px;top:85.2px;width:12px;height:18.8px;background:#585858;border-radius:2px;box-shadow:inset 0 0 0 1px #6a6a6a;"><svg style="left:0px;top:0px;" width="12" height="19" viewBox="0 0 12 19"><path d="M3.6 9.5 L8 5.4 V13.6z" fill="#fff"/></svg></div>
<div style="left:779.2px;top:85.2px;width:12px;height:18.8px;background:#2a2a2a;border-radius:2px;box-shadow:inset 0 0 0 1px #5c5c5c;"><svg style="left:0px;top:0px;" width="12" height="19" viewBox="0 0 12 19"><path d="M8.4 9.5 L4 5.4 V13.6z" fill="#d8d8d8"/></svg></div>
<div style="left:230px;top:106.5px;width:542.2px;height:579.5px;background:#fff;overflow:hidden;"><svg style="left:0px;top:-0.5px;" width="543" height="580" viewBox="0 0 543 580"><defs><filter id="bl" x="-20%" y="-20%" width="140%" height="140%"><feGaussianBlur stdDeviation="2.6"/></filter>
<filter id="bl2" x="-20%" y="-20%" width="140%" height="140%"><feGaussianBlur stdDeviation="1.6"/></filter></defs>
<rect x="0" y="0" width="543" height="580" fill="#ffffff"/>
<circle cx="40.6" cy="291.4" r="97.7" fill="#ffb48b"/>
<circle cx="466.7" cy="285" r="98.3" fill="#ffb48b"/>
<circle cx="164.1" cy="276" r="38.7" fill="#713d35"/>
<circle cx="319.8" cy="270.6" r="38.6" fill="#713d35"/>
<!-- brows -->
<path d="M107.4 212.9 C111.2 213.5 123.0 215.4 130.2 216.4 C137.3 217.4 144.3 218.4 150.3 218.9 C156.3 219.4 161.9 219.8 166.4 219.5 C170.9 219.2 174.1 218.7 177.5 217.2 C180.9 215.7 184.2 213.1 187.0 210.6 C189.8 208.1 192.4 205.3 194.6 202.4 C196.8 199.5 199.4 194.9 200.4 193.4 L201.0 194.4 C200.3 196.0 198.6 200.8 196.8 204.0 C195.0 207.2 192.9 210.9 190.0 213.8 C187.1 216.7 183.5 219.9 179.6 221.6 C175.7 223.3 171.3 223.6 166.4 223.8 C161.5 224.0 156.3 223.4 150.3 222.8 C144.3 222.2 137.4 221.1 130.2 220.0 C123.0 218.9 111.0 217.1 107.2 216.5 Z" fill="#713d35"/>
<path d="M279.2 209.6 C300 205.2 330 202 354.8 201.8 C355.8 202 355.6 203.2 354.6 203.2 C330 205 302 209.4 280 214 C277.4 214.4 276.8 210.2 279.2 209.6z" fill="#713d35"/>
<!-- mouth -->
<path d="M215.6 305.4 C224 298 236 291.2 247.2 287 C248.4 286.8 248.4 288 247.6 288.4 C237 293.4 226 300.6 217.4 307.8 C215.8 309 214.2 306.8 215.6 305.4z" fill="#713d35"/>
<!-- white squiggles -->
<g fill="none" stroke="#ffffff" stroke-linecap="round" stroke-linejoin="round">
<path d="M-3 252 C0 248.6 4.6 246 9 245" stroke-width="8"/>
<path d="M-3 300 C12 280 38 252 49 243 C52.4 240.6 53.6 242.6 52.4 246 C46 266 40.4 296 39.4 312 C39.2 315.6 41 316.2 43.4 313.6 C56 298 74 272 82.6 257.6" stroke-width="8.6"/>
<path d="M406.4 252.6 C412 272 428 306 438.6 319.6 C441.4 323 443.8 322.4 444.8 318.4 C450 298 456 268 461.4 250.6 C462.2 248.2 463.6 248.4 464.8 250.4 C474 266 490 292 501.4 305.2 C503.6 307.4 505 306.6 505 303.8 C505.4 288 503.6 256 501.2 236" stroke-width="8.8"/>
</g>
<!-- bottom left arm -->
<path d="M-12.0 468.0 C-10.0 469.3 -6.0 472.4 0.0 476.0 C6.0 479.6 15.6 485.3 23.9 489.9 C32.2 494.5 41.1 499.7 49.7 503.7 C58.3 507.7 67.0 511.1 75.6 514.0 C84.2 516.9 94.3 519.2 101.4 520.9 C108.5 522.6 112.4 523.3 118.0 524.3 C123.6 525.3 128.0 525.5 135.0 526.7 C142.0 527.9 151.7 529.9 160.0 531.5 C168.3 533.1 178.1 534.7 185.0 536.5 C191.9 538.3 197.0 540.2 201.7 542.3 C206.4 544.4 210.2 546.0 213.0 549.0 C215.8 552.0 217.8 556.2 218.3 560.0 C218.8 563.8 216.8 568.0 216.0 572.0 C215.2 576.0 213.8 582.0 213.3 584.0 L200 590 L-12 590z" fill="#ffdcb8" filter="url(#bl2)"/>
<path d="M-12.0 494.5 C-10.0 495.9 -6.0 498.8 0.0 502.8 C6.0 506.8 15.6 513.4 23.9 518.3 C32.2 523.2 41.1 528.1 49.7 532.1 C58.3 536.1 67.0 539.1 75.6 542.0 C84.2 544.9 94.3 547.5 101.4 549.4 C108.5 551.3 112.4 551.9 118.0 553.2 C123.6 554.5 128.0 555.8 135.0 557.3 C142.0 558.8 151.7 560.6 160.0 561.9 C168.3 563.2 178.2 564.3 185.0 565.3 C191.8 566.3 197.9 567.4 200.5 567.8 L200.5 590 L-12 590z" fill="#ffffff"/>
<path d="M-12.0 528.5 C-10.0 529.7 -6.0 532.3 0.0 535.6 C6.0 538.9 15.6 544.5 23.9 548.5 C32.2 552.5 41.1 556.2 49.7 559.7 C58.3 563.2 67.0 566.3 75.6 569.2 C84.2 572.1 94.3 575.1 101.4 577.0 C108.5 578.9 111.6 579.3 118.0 580.5 C124.4 581.7 136.3 583.4 140.0 584.0 L-12 590z" fill="#ffdcb8"/>
<path d="M-12.0 494.5 C-10.0 495.9 -6.0 498.8 0.0 502.8 C6.0 506.8 15.6 513.4 23.9 518.3 C32.2 523.2 41.1 528.1 49.7 532.1 C58.3 536.1 67.0 539.1 75.6 542.0 C84.2 544.9 94.3 547.5 101.4 549.4 C108.5 551.3 112.4 551.9 118.0 553.2 C123.6 554.5 128.0 555.8 135.0 557.3 C142.0 558.8 151.7 560.6 160.0 561.9 C168.3 563.2 178.2 564.3 185.0 565.3 C191.8 566.3 197.9 567.4 200.5 567.8" fill="none" stroke="#713d35" stroke-width="24.6" stroke-linecap="round"/>
<path d="M165 572 L165 584 L203 584 L203 572z" fill="#713d35"/>
<!-- middle hand -->
<path d="M316 476 C330 482 336.6 520 330 590 L290 590 L300 500z" fill="#ffdcb8" filter="url(#bl2)"/>
<path d="M232 580 L262 500 L250 478 L300 470 L318 452 L326 470 L306 500 L296 580z" fill="#ffffff"/>
<path d="M220 586 C236 556 250 524 258.6 502.4 C262 493 258 488.6 249.6 485.6 C243 483.6 238.6 482 237.8 477 C237 470.6 244.4 469 252 471.6 C260 474.4 268 481.4 277 480 C291 476.4 306 456.4 320.6 447.6 C326 444.8 329.6 448 328.6 454 C326.6 466 318 480 313 491 C308 502 307.4 520 303.4 540 C300.6 554 296 570 291 586" fill="none" stroke="#713d35" stroke-width="13" stroke-linecap="round" stroke-linejoin="round"/>
<!-- right arm -->
<path d="M462.0 548.0 C462.3 546.6 462.1 544.4 463.8 539.9 C465.5 535.4 467.5 526.9 472.4 520.9 C477.3 514.9 485.3 509.2 493.1 503.7 C500.9 498.2 510.8 492.6 519.0 488.1 C527.2 483.6 536.7 479.6 542.2 476.9 C547.7 474.2 550.4 472.8 552.0 472.0 L552 472 L552 524 L478 546z" fill="#ffdcb8" filter="url(#bl2)"/>
<path d="M482.6 552 C483.6 562 488 572 498 590 L524 590 L506 552z" fill="#ffdcb8" filter="url(#bl2)"/>
<path d="M478.4 544.2 L552 518" fill="none" stroke="#713d35" stroke-width="24.4" stroke-linecap="round"/>
<path d="M503 546 L505.2 557.1 L519.6 580.5 L524 590 L556 590 L542.2 565.7 L530.2 539.9 L515 534z" fill="#713d35"/>
<path d="M530.4 540.2 L548 533.6 L548 578z" fill="#ffffff"/>
</svg></div>
<div style="left:772.2px;top:106px;width:19.8px;height:590px;background:#2d2d2d;"></div>
<div style="left:773.2px;top:116px;width:18px;height:559.4px;border-radius:5px;background:linear-gradient(to right,#2a2a2a,#404040 55%,#343434);"></div>
<div style="left:773.2px;top:352.4px;width:18px;height:116.6px;border-radius:4px;background:linear-gradient(to right,#616161,#6f6f6f 50%,#636363);"></div>
<svg style="left:772px;top:106px;" width="20" height="12" viewBox="0 0 20 12"><path d="M6 9 L10.2 2 L14.3 9z" fill="#8e8e8e"/></svg>
<svg style="left:772px;top:676px;" width="20" height="10" viewBox="0 0 20 10"><path d="M6.5 1.8 L13.7 1.8 L10.1 8.6z" fill="#c4c4c8"/></svg>
<div style="left:230px;top:686px;width:562px;height:10px;background:#2d2d2d;"></div>
<div style="left:240px;top:687.6px;width:540px;height:20px;border-radius:5px;background:linear-gradient(to bottom,#2b2b2b,#3a3a3a);"></div>
<div style="left:444.4px;top:687.1px;width:110.3px;height:20px;border-radius:4px;background:linear-gradient(to bottom,#6d6d6d,#626262);"></div>
<svg style="left:230px;top:686px;" width="12" height="10" viewBox="0 0 12 10"><path d="M2.2 11 L8.4 5.6 V11z" fill="#a8a8a8"/></svg>
<svg style="left:780px;top:686px;" width="12" height="10" viewBox="0 0 12 10"><path d="M3 6.3 L7.4 10.4 H3z" fill="#a8a8a8"/></svg>
<div class="dots" style="left:792px;top:85px;width:5px;height:611px;"></div>
<div style="left:792.3px;top:106px;width:0.8px;height:590px;background:#414141;"></div>
<div style="left:797px;top:85px;width:227px;height:611px;background:#262626;"></div>
<div style="left:797px;top:83px;width:227px;height:1px;background:#0f2438;"></div><div class="blue" style="left:797px;top:84px;width:227px;height:1.2px;background:#4c93c4;"></div><div class="hdr" style="left:797px;top:85.2px;width:227px;height:20.2px;"></div><svg style="left:996.6px;top:89px;" width="27" height="10" viewBox="0 0 27 10"><path d="M4.8 2.4 H1.1 V9 H7.7 V5.4" fill="none" stroke="#d0d0d0" stroke-width="1.15"/><path d="M3.9 6.1 L8.9 1.1 M5.4 .8 H9.2 V4.6" fill="none" stroke="#d0d0d0" stroke-width="1.15"/>
<path d="M17.5 1.6 L24.1 8.2 M24.1 1.6 L17.5 8.2" stroke="#d4d4d4" stroke-width="2.3" fill="none"/></svg><span class="t" id="t43" style="left:888.80px;top:90.69px;font-size:11px;color:#d6d6d6;letter-spacing:-0.884px;">Lớp</span>
<span class="t" id="t44" style="left:803.10px;top:114.69px;font-size:11px;color:#d8d8d8;letter-spacing:-0.013px;">Độ trong</span>
<div style="left:859.2px;top:111.6px;width:123.5px;height:15.2px;background:linear-gradient(to right,#8fd0fb,#69b0e6 70%,#5b9fd8);box-shadow:0 0 0 .7px #1a1a1a, 0 1px 2px .5px rgba(0,0,0,.45);"></div>
<span class="t" id="t45" style="left:989.90px;top:114.69px;font-size:11px;color:#d8d8d8;letter-spacing:-0.141px;">100 %</span>
<span class="t" id="t46" style="left:802.80px;top:139.69px;font-size:11px;color:#d8d8d8;letter-spacing:-0.137px;">Pha trộn</span>
<div style="left:862.5px;top:133.5px;width:158px;height:21.2px;background:#484848;border-radius:3px;"></div>
<span class="t" id="t47" style="left:864.40px;top:139.69px;font-size:11px;color:#cdcdcd;letter-spacing:-0.370px;">Bình thường</span>
<svg style="left:1007px;top:141px;" width="10" height="7" viewBox="0 0 10 7"><path d="M1 1 H9 L5 5.6z" fill="#8c8c8c"/></svg>
<div style="left:806.2px;top:165.1px;width:10.6px;height:10.6px;border:1px solid #4c4c4c;"></div>
<span class="t" id="t48" style="left:823.00px;top:165.69px;font-size:11px;color:#7a7a7a;letter-spacing:-0.243px;">Bảo vệ alpha</span>
<div style="left:897px;top:165px;width:10.9px;height:10.8px;border:1.2px solid #d2d2d2;"></div>
<span class="t" id="t49" style="left:913.00px;top:165.69px;font-size:11px;color:#d8d8d8;letter-spacing:-0.202px;">Xén bớt</span>
<div style="left:964px;top:165px;width:10.9px;height:10.8px;border:1.2px solid #d2d2d2;"></div>
<span class="t" id="t50" style="left:980.40px;top:165.69px;font-size:11px;color:#d8d8d8;letter-spacing:-0.401px;">Khóa</span>
<div style="left:800px;top:185px;width:205.7px;height:433px;background:#4a4846;"></div>
<div style="left:1005.7px;top:185px;width:18.3px;height:433px;background:#353535;"></div>
<div style="left:800px;top:185px;width:204px;height:39.2px;background:#5d5d5d;"></div>
<div style="left:800px;top:224px;width:205px;height:1px;background:#262626;"></div>
<div style="left:1004px;top:185px;width:1.2px;height:39.5px;background:#2a2a2a;"></div>
<div style="left:800px;top:224.9px;width:204px;height:39.2px;background:#5d5d5d;"></div>
<div style="left:800px;top:263.9px;width:205px;height:1px;background:#262626;"></div>
<div style="left:1004px;top:224.9px;width:1.2px;height:39.5px;background:#2a2a2a;"></div>
<div style="left:800px;top:264.9px;width:204px;height:39.2px;background:#5d5d5d;"></div>
<div style="left:800px;top:303.9px;width:205px;height:1px;background:#262626;"></div>
<div style="left:1004px;top:264.9px;width:1.2px;height:39.5px;background:#2a2a2a;"></div>
<div style="left:800px;top:304.7px;width:204px;height:39.2px;background:#5d5d5d;"></div>
<div style="left:800px;top:343.7px;width:205px;height:1px;background:#262626;"></div>
<div style="left:1004px;top:304.7px;width:1.2px;height:39.5px;background:#2a2a2a;"></div>
<div style="left:818.6px;top:264.9px;width:185.4px;height:39px;background:#4b9ad8;"></div>
<div style="left:800px;top:264px;width:204px;height:1px;background:#1c2c44;"></div>
<div style="left:800px;top:303.8px;width:204px;height:1px;background:#1c2c44;"></div>
<div style="left:804.4px;top:199.9px;width:9.2px;height:9.2px;border-radius:50%;background:radial-gradient(circle at 45% 45%,#e6e6e6 0,#c8c8c8 55%,#9a9a9a 100%);"></div>
<div style="left:804.4px;top:239.8px;width:9.2px;height:9.2px;border-radius:50%;background:radial-gradient(circle at 45% 45%,#e6e6e6 0,#c8c8c8 55%,#9a9a9a 100%);"></div>
<div style="left:804.4px;top:279.8px;width:9.2px;height:9.2px;border-radius:50%;background:radial-gradient(circle at 45% 45%,#e6e6e6 0,#c8c8c8 55%,#9a9a9a 100%);"></div>
<div style="left:804.4px;top:319.6px;width:9.2px;height:9.2px;border-radius:50%;background:radial-gradient(circle at 45% 45%,#e6e6e6 0,#c8c8c8 55%,#9a9a9a 100%);"></div>
<div style="left:834px;top:186.8px;width:34.2px;height:34.6px;background-color:#fff;background-image:conic-gradient(#e4e4e4 25%,#fff 0 50%,#e4e4e4 0 75%,#fff 0);background-size:8.5px 8.5px;"></div>
<svg style="left:834px;top:186.6px;" width="34.2" height="34.8" viewBox="0 0 34.2 34.8"><g fill="none" stroke="#6a382e" stroke-width="1"><path d="M11.6 30 C4 28.6 .4 22 1 15.8 C1.8 8 8.6 3.8 16.4 3.8 C24.6 3.8 31.4 8.6 31.8 16 C32.2 22.4 29.4 27.2 24.8 28.6"/><path d="M11.6 29.8 C12.2 31.4 12.2 33 11.8 34.8 M24.8 28.6 C24.4 30.6 24.8 32.6 25.6 34.4 M15 26 v5.4 M16.4 26.4 v4.6"/><path d="M11.4 5 C8.4 3.6 6.4 1.4 7.4 .6 C8.8 -.2 10.8 2.2 11.6 4.4 C12.2 2 14 .2 15.2 1 C16.2 2 13.8 4.2 12 5.2"/></g><circle cx="11.3" cy="19.1" r="1.15" fill="#4a2420"/><circle cx="16.8" cy="18.9" r="1.15" fill="#4a2420"/></svg>
<div style="left:834px;top:226.6px;width:34.2px;height:34.4px;background-color:#fff;background-image:conic-gradient(#e4e4e4 25%,#fff 0 50%,#e4e4e4 0 75%,#fff 0);background-size:8.5px 8.5px;"></div>
<svg style="left:834px;top:226.6px;" width="34.2" height="34.6" viewBox="0 0 34.2 34.6"><circle cx="6.1" cy="19.3" r="3.1" fill="#ffb08a"/><circle cx="22" cy="19.1" r="3.1" fill="#ffb08a"/><path d="M6.8 2.8 l1.8 -1.4 l1.2 1.6 M11 2.4 l1.6 -1 l.8 1.4" stroke="#b4dcae" stroke-width=".9" fill="none"/></svg>
<div style="left:834px;top:279.8px;width:34.2px;height:9px;background:#fff;background-image:repeating-linear-gradient(90deg,rgba(226,150,165,.55) 0 1.6px,rgba(255,255,255,0) 1.6px 2.4px,rgba(226,150,165,.3) 2.4px 4px,rgba(255,255,255,0) 4px 5.2px);background-size:100% 5.4px;background-repeat:no-repeat;background-position:0 1.8px;box-shadow:inset 0 0 0 1px #f6f2f2;"></div>
<div style="left:834px;top:306.6px;width:34.2px;height:34.4px;background:#ffd5ac;"></div>
<svg style="left:834px;top:306.6px;" width="34.2" height="34.4" viewBox="0 0 34.2 34.4"><defs><filter id="tb"><feGaussianBlur stdDeviation=".7"/></filter></defs><g fill="#fff" filter="url(#tb)"><ellipse cx="17.2" cy="18.4" rx="16.6" ry="14.4"/><rect x="7" y="27" width="20.5" height="8"/><path d="M6.5 0 h21 l-3 6 h-15z"/></g></svg>
<span class="t" id="t51" style="left:885.40px;top:198.84px;font-size:12px;color:#ffffff;letter-spacing:-0.373px;">Lớp2</span>
<span class="t" id="t52" style="left:885.40px;top:238.84px;font-size:12px;color:#ffffff;letter-spacing:-0.473px;">Lớp1</span>
<span class="t" id="t53" style="left:885.40px;top:278.84px;font-size:12px;color:#ffffff;font-weight:bold;letter-spacing:0.746px;">@Tranma1985</span>
<span class="t" id="t54" style="left:885.40px;top:318.84px;font-size:12px;color:#ffffff;letter-spacing:-0.373px;">Lớp3</span>
<span class="t" id="t55" style="left:982.90px;top:209.53px;font-size:10px;color:#ffffff;letter-spacing:-0.462px;">8</span>
<div style="left:989.8px;top:209.4px;width:11.8px;height:11.2px;background:#843a31;border:1px solid #80706e;"></div>
<svg style="left:982.2px;top:275.2px;" width="19" height="19" viewBox="-6.8 -6.8 13.6 13.6"><g fill="#fff"><circle cx="0" cy="0" r="4.3"/><rect x="-1.35" y="-6.4" width="2.7" height="3.4" transform="rotate(0)"/><rect x="-1.35" y="-6.4" width="2.7" height="3.4" transform="rotate(45)"/><rect x="-1.35" y="-6.4" width="2.7" height="3.4" transform="rotate(90)"/><rect x="-1.35" y="-6.4" width="2.7" height="3.4" transform="rotate(135)"/><rect x="-1.35" y="-6.4" width="2.7" height="3.4" transform="rotate(180)"/><rect x="-1.35" y="-6.4" width="2.7" height="3.4" transform="rotate(225)"/><rect x="-1.35" y="-6.4" width="2.7" height="3.4" transform="rotate(270)"/><rect x="-1.35" y="-6.4" width="2.7" height="3.4" transform="rotate(315)"/></g><circle cx="0" cy="0" r="1.7" fill="#4b9ad8"/></svg>
<svg style="left:1004px;top:185px;" width="20" height="433" viewBox="0 0 20 433"><defs><linearGradient id="sbl" x1="0" y1="0" x2="1" y2="0"><stop offset="0" stop-color="#868686"/><stop offset=".25" stop-color="#747474"/><stop offset="1" stop-color="#5c5c5c"/></linearGradient></defs>
<path d="M5.4 8.6 L9.6 2.8 L13.8 8.6z" fill="#b4b4b4"/><rect x="1.7" y="10.6" width="24" height="409.4" rx="5" fill="url(#sbl)"/><path d="M5.4 424 L13.8 424 L9.6 430z" fill="#b4b4b4"/></svg>
<div style="left:797px;top:618px;width:227px;height:33px;background:#262626;"></div>
<div class="btn" style="left:803px;top:621.4px;width:23px;height:22.8px;"><svg style="left:0px;top:0px;" width="23" height="23" viewBox="0 0 23 23"><path d="M5.5 4.9 h7.9 l3.6 3.6 v9 h-11.5z" fill="none" stroke="#e4e4e4" stroke-width="1.3"/><path d="M13.2 4.9 v3.8 h3.8z" fill="#e4e4e4"/></svg></div>
<div class="btn" style="left:830px;top:621.4px;width:23px;height:22.8px;"><svg style="left:0px;top:0px;" width="23" height="23" viewBox="0 0 23 23"><path d="M5.5 4.9 h7.9 l3.6 3.6 v9 h-11.5z" fill="none" stroke="#e4e4e4" stroke-width="1.3"/><path d="M13.2 4.9 v3.8 h3.8z" fill="#e4e4e4"/><text x="11.2" y="16" text-anchor="middle" font-family="Liberation Sans,sans-serif" font-size="9.6" fill="#e4e4e4">8</text></svg></div>
<div class="btn" style="left:857px;top:621.4px;width:23px;height:22.8px;"><svg style="left:0px;top:0px;" width="23" height="23" viewBox="0 0 23 23"><path d="M5.5 4.9 h7.9 l3.6 3.6 v9 h-11.5z" fill="none" stroke="#e4e4e4" stroke-width="1.3"/><path d="M13.2 4.9 v3.8 h3.8z" fill="#e4e4e4"/><text x="11.2" y="16" text-anchor="middle" font-family="Liberation Sans,sans-serif" font-size="9.6" fill="#e4e4e4">1</text></svg></div>
<div class="btn" style="left:883.8px;top:621.4px;width:30.4px;height:22.8px;"><svg style="left:0px;top:0px;" width="30.4" height="23" viewBox="0 0 30.4 23"><path d="M4.4 4.6 h5.2 l3 3 v5 M8.6 16.4 h-4.2 v-11.8 M9.6 4.6 v3 h3" fill="none" stroke="#e4e4e4" stroke-width="1.1"/><path d="M12.6 11.6 v7 M9.1 15.1 h7" stroke="#e4e4e4" stroke-width="1.5"/><path d="M19.4 9.4 h6.4 l-3.2 4z" fill="#fff"/></svg></div>
<div class="btn" style="left:918px;top:621.4px;width:23px;height:22.8px;"><svg style="left:0px;top:0px;" width="23" height="23" viewBox="0 0 23 23"><path d="M4.6 8.6 V7 a1 1 0 0 1 1 -1 h4.2 l1.4 1.6 h6.2 a1 1 0 0 1 1 1 v8.4 a1 1 0 0 1 -1 1 h-11.8 a1 1 0 0 1 -1 -1z" fill="#e4e4e4"/></svg></div>
<div class="btn" style="left:952px;top:621.4px;width:23px;height:22.8px;"><svg style="left:0px;top:0px;" width="23" height="23" viewBox="0 0 23 23"><rect x="5.6" y="8.6" width="8.8" height="8.8" fill="#414141" stroke="#e4e4e4" stroke-width="1.2"/><path d="M8.6 8.6 V5.6 H17.4 V14.4 H14.4" fill="none" stroke="#e4e4e4" stroke-width="1.2"/></svg></div>
<div class="btn" style="left:979.3px;top:621.4px;width:22.6px;height:22.8px;background:#262626;box-shadow:inset 0 0 0 1px #505050;"><svg style="left:0px;top:0px;" width="22.6" height="23" viewBox="0 0 22.6 23"><rect x="3.6" y="4" width="4.6" height="4.6" fill="none" stroke="#e4e4e4" stroke-width="1"/><rect x="3.6" y="12.4" width="4.6" height="4.6" fill="none" stroke="#e4e4e4" stroke-width="1"/><rect x="5.6" y="6" width="2.6" height="2.6" fill="#e4e4e4"/><rect x="5.6" y="12.4" width="2.6" height="2.6" fill="#e4e4e4"/><path d="M9.4 6.4 L12 10.6 L9.4 14.6 M12 10.6 H13.6" fill="none" stroke="#e4e4e4" stroke-width="1"/><rect x="13.6" y="8" width="5" height="5" fill="#e4e4e4"/></svg></div>
<div style="left:946px;top:627px;width:1px;height:11px;background:#4a4a4a;"></div>
<div style="left:1007px;top:627px;width:1px;height:11px;background:#4a4a4a;"></div>
<div style="left:1014px;top:622px;width:8px;height:21px;background:#464646;border-radius:3px;"></div>
<div class="dots" style="left:797px;top:650px;width:227px;height:5px;"></div>
<div style="left:797px;top:654px;width:227px;height:1px;background:#0f2438;"></div><div class="blue" style="left:797px;top:655px;width:227px;height:1.2px;background:#3f82b2;"></div><div class="hdr" style="left:797px;top:656.2px;width:227px;height:20.2px;"></div><svg style="left:996.6px;top:660px;" width="27" height="10" viewBox="0 0 27 10"><path d="M4.8 2.4 H1.1 V9 H7.7 V5.4" fill="none" stroke="#d0d0d0" stroke-width="1.15"/><path d="M3.9 6.1 L8.9 1.1 M5.4 .8 H9.2 V4.6" fill="none" stroke="#d0d0d0" stroke-width="1.15"/>
<path d="M17.5 1.6 L24.1 8.2 M24.1 1.6 L17.5 8.2" stroke="#d4d4d4" stroke-width="2.3" fill="none"/></svg><span class="t" id="t56" style="left:871.50px;top:661.69px;font-size:11px;color:#d6d6d6;letter-spacing:-0.118px;">Reference</span>
<div style="left:797px;top:676.5px;width:227px;height:20px;background:#262626;"></div>
<div class="btn" style="left:801.4px;top:679.8px;width:23px;height:23px;"><svg style="left:0px;top:0px;" width="23" height="23" viewBox="0 0 23 23"><path d="M6 13.4 a3 3 0 0 1 .4 -5.8 a4.6 4.6 0 0 1 8.8 -.6 a3.4 3.4 0 0 1 1.6 6.4z" fill="#e4e4e4"/><path d="M10.2 10 h2.6 v6 h2.2 l-3.5 4 l-3.5 -4 h2.2z" fill="#e4e4e4" stroke="#3e3e3e" stroke-width=".8"/></svg></div>
<div class="btn" style="left:828px;top:679.8px;width:23px;height:23px;"><svg style="left:0px;top:0px;" width="23" height="23" viewBox="0 0 23 23"><path d="M4.4 16.4 V6.6 a.8 .8 0 0 1 .8 -.8 h3.6 l1.4 1.6 h5.6 v2" fill="none" stroke="#e4e4e4" stroke-width="1.2"/><path d="M4.6 17 L7.4 10 H19 L16.4 17z" fill="#e4e4e4"/></svg></div>
<div class="btn" style="left:855px;top:679.8px;width:23px;height:23px;"><svg style="left:0px;top:0px;" width="23" height="23" viewBox="0 0 23 23"><path d="M7.4 7.8 L15.4 15.8 M15.4 7.8 L7.4 15.8" stroke="#e4e4e4" stroke-width="2.3"/></svg></div>
<div class="btn" style="left:888.8px;top:679.8px;width:23px;height:23px;"><svg style="left:0px;top:0px;" width="23" height="23" viewBox="0 0 23 23"><circle cx="10" cy="9.4" r="4.7" fill="none" stroke="#e4e4e4" stroke-width="1.9"/><path d="M13.4 12.8 L18 17.6" stroke="#e4e4e4" stroke-width="2.6"/><path d="M10 7 v4.8 M7.6 9.4 h4.8" stroke="#e4e4e4" stroke-width="1.7"/></svg></div>
<div class="btn" style="left:916.4px;top:679.8px;width:23px;height:23px;"><svg style="left:0px;top:0px;" width="23" height="23" viewBox="0 0 23 23"><rect x="4.6" y="4.6" width="13.8" height="13.8" fill="none" stroke="#e4e4e4" stroke-width="1"/><path d="M7 7 l3 3 M16 7 l-3 3 M7 16 l3 -3 M16 16 l-3 -3" stroke="#e4e4e4" stroke-width="1.2"/><path d="M6.6 9.4 V6.6 H9.4z M16.4 9.4 V6.6 H13.6z M6.6 13.6 V16.4 H9.4z M16.4 13.6 V16.4 H13.6z" fill="#e4e4e4"/></svg></div>
<div class="btn" style="left:943px;top:679.8px;width:23px;height:23px;"><svg style="left:0px;top:0px;" width="23" height="23" viewBox="0 0 23 23"><circle cx="10" cy="9.4" r="4.7" fill="none" stroke="#e4e4e4" stroke-width="1.9"/><path d="M13.4 12.8 L18 17.6" stroke="#e4e4e4" stroke-width="2.6"/><path d="M7.6 9.4 h4.8" stroke="#e4e4e4" stroke-width="1.7"/></svg></div>
<div class="btn" style="left:977px;top:679.8px;width:23px;height:23px;"><svg style="left:0px;top:0px;" width="23" height="23" viewBox="0 0 23 23"><path d="M5.4 17.4 L13 9.8 L15.4 12.2 L7.8 19.8 L4.8 20.4z" fill="none" stroke="#e4e4e4" stroke-width="1.4" stroke-linejoin="round"/><path d="M12 8 L13.6 6.4 L15 7.8 L16.6 5.2 C17.8 4 20.4 6.2 19.4 7.8 L17.6 9.8 L19.2 11.4 L17.6 13z" fill="#e4e4e4"/></svg></div>
<div style="left:883px;top:686px;width:1px;height:11px;background:#4a4a4a;"></div>
<div style="left:971.4px;top:686px;width:1px;height:11px;background:#4a4a4a;"></div>
<div style="left:1016px;top:681px;width:8px;height:20px;background:#464646;border-radius:3px;"></div>
</div>
</body></html>
